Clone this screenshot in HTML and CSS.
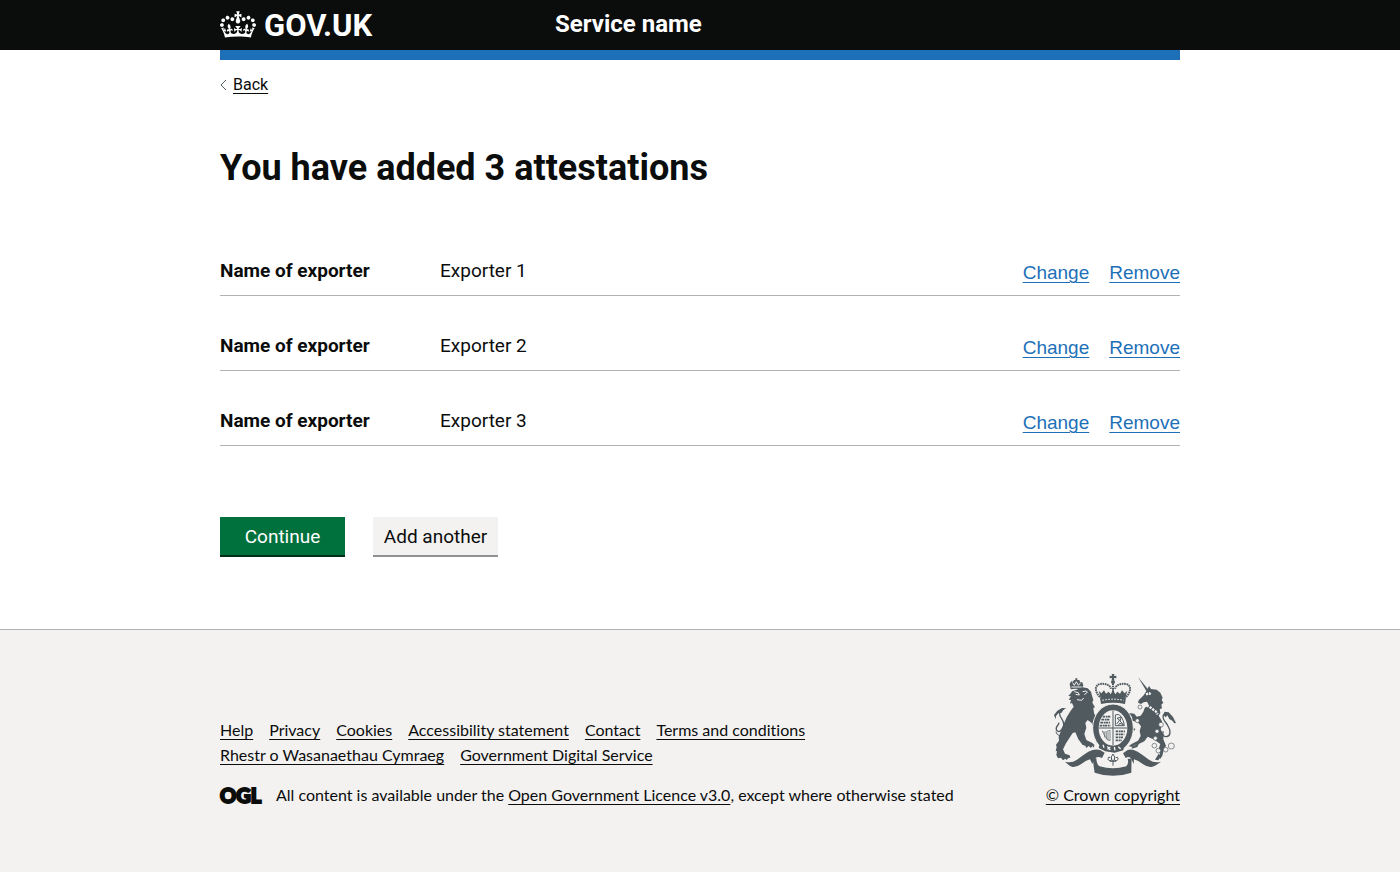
FILE: index.html
```
<!DOCTYPE html>
<html lang="en">
<head>
<meta charset="utf-8">
<meta name="viewport" content="width=device-width, initial-scale=1">
<title>You have added 3 attestations</title>
<link rel="stylesheet" href="styles.css">
</head>
<body>
<header class="header">
  <div class="container header-grid">
    <a class="logo" href="#">
      <svg class="crown" viewBox="0 0 132 97" aria-hidden="true"><path fill="currentColor" d="M25 30.2c3.5 1.5 7.7-.2 9.1-3.7 1.5-3.6-.2-7.8-3.9-9.2-3.6-1.4-7.6.3-9.1 3.9-1.4 3.5.3 7.5 3.9 9zM9 39.5c3.6 1.5 7.8-.2 9.2-3.7 1.5-3.6-.2-7.8-3.9-9.1-3.6-1.5-7.6.2-9.1 3.8-1.4 3.5.3 7.5 3.8 9zM4.4 57.2c3.5 1.5 7.7-.2 9.1-3.8 1.5-3.6-.2-7.7-3.9-9.1-3.5-1.5-7.6.3-9.1 3.8-1.4 3.5.3 7.6 3.9 9.1zm38.3-21.4c3.5 1.5 7.7-.2 9.1-3.8 1.5-3.6-.2-7.7-3.9-9.1-3.6-1.5-7.6.3-9.1 3.8-1.3 3.6.4 7.7 3.9 9.1zm64.4-5.6c-3.6 1.5-7.8-.2-9.1-3.7-1.5-3.6.2-7.8 3.8-9.2 3.6-1.4 7.7.3 9.2 3.9 1.3 3.5-.4 7.5-3.9 9zm15.9 9.3c-3.6 1.5-7.7-.2-9.1-3.7-1.5-3.6.2-7.8 3.7-9.1 3.6-1.5 7.7.2 9.2 3.8 1.5 3.5-.3 7.5-3.8 9zm4.7 17.7c-3.6 1.5-7.8-.2-9.2-3.8-1.5-3.6.2-7.7 3.9-9.1 3.6-1.5 7.7.3 9.2 3.8 1.3 3.5-.4 7.6-3.9 9.1zM89.3 35.8c-3.6 1.5-7.8-.2-9.2-3.8-1.4-3.6.2-7.7 3.9-9.1 3.6-1.5 7.7.3 9.2 3.8 1.4 3.6-.3 7.7-3.9 9.1zM69.7 17.7l8.9 4.7V9.3l-8.9 2.8c-.2-.3-.5-.6-.9-.9L72.4 0H59.6l3.5 11.2c-.3.3-.6.5-.9.9l-8.8-2.8v13.1l8.8-4.7c.3.3.6.7.9.9l-5 15.4v.1c-.2.8-.4 1.6-.4 2.4 0 4.1 3.1 7.5 7 8.1h.2c.3 0 .7.1 1 .1.4 0 .7 0 1-.1h.2c4-.6 7.1-4.1 7.1-8.1 0-.8-.1-1.7-.4-2.4V34l-5.1-15.4c.4-.2.7-.6 1-.9zM66 92.8c16.9 0 32.8 1.1 47.1 3.2 4-16.9 8.9-26.7 14-33.5l-9.6-3.4c1 4.9 1.1 7.2 0 10.2-1.5-1.4-3-4.3-4.2-8.7L108.6 76c2.8-2 5-3.2 7.5-3.3-4.4 9.4-10 11.9-13.6 11.2-4.3-.8-6.3-4.6-5.6-7.9 1-4.7 5.7-5.9 8-.5 4.3-8.7-3-11.4-7.6-8.8 7.1-7.2 7.9-13.5 2.1-21.1-8 6.1-8.1 12.3-4.5 20.8-4.7-5.4-12.1-2.5-9.5 6.2 3.4-5.2 7.9-2 7.2 3.1-.6 4.3-6.4 7.8-13.5 7.2-10.3-.9-10.9-8-11.2-13.8 2.5-.5 7.1 1.8 11 7.3L80.2 60c-4.1 4.4-8 5.3-12.3 5.4 1.4-4.4 8-11.6 8-11.6H55.5s6.4 7.2 7.9 11.6c-4.2-.1-8-1-12.3-5.4l1.4 16.4c3.9-5.5 8.5-7.7 10.9-7.3-.3 5.8-.9 12.8-11.1 13.8-7.2.6-12.9-2.9-13.5-7.2-.7-5 3.8-8.3 7.1-3.1 2.7-8.7-4.6-11.6-9.4-6.2 3.7-8.5 3.6-14.7-4.6-20.8-5.8 7.6-5 13.9 2.2 21.1-4.7-2.6-11.9.1-7.7 8.8 2.3-5.5 7.1-4.2 8.1.5.7 3.3-1.3 7.1-5.7 7.9-3.5.7-9-1.8-13.5-11.2 2.5.1 4.7 1.3 7.5 3.3l-4.7-15.4c-1.2 4.4-2.7 7.2-4.3 8.7-1.1-3-.9-5.3 0-10.2l-9.5 3.4c5 6.9 9.9 16.7 14 33.5 14.8-2.1 30.8-3.2 47.7-3.2z"/></svg>
      <span>GOV.UK</span>
    </a>
    <a class="service" href="#">Service name</a>
  </div>
</header>
<div class="container page">
  <div class="accent"></div>
  <a class="back" href="#"><svg class="chevron" viewBox="0 0 7 12" aria-hidden="true"><path d="M6 1 1 6l5 5" fill="none" stroke="#505a5f"/></svg><span>Back</span></a>
  <main>
    <h1>You have added 3 attestations</h1>
    <dl class="summary">
      <div class="row"><dt>Name of exporter</dt><dd>Exporter 1</dd><dd class="actions"><a href="#">Change</a><a href="#">Remove</a></dd></div>
      <div class="row"><dt>Name of exporter</dt><dd>Exporter 2</dd><dd class="actions"><a href="#">Change</a><a href="#">Remove</a></dd></div>
      <div class="row"><dt>Name of exporter</dt><dd>Exporter 3</dd><dd class="actions"><a href="#">Change</a><a href="#">Remove</a></dd></div>
    </dl>
    <div class="buttons">
      <button class="button" type="button">Continue</button>
      <button class="button secondary" type="button">Add another</button>
    </div>
  </main>
</div>
<footer class="footer">
  <div class="container footer-grid">
    <div class="meta">
      <ul class="links">
        <li><a href="#">Help</a></li>
        <li><a href="#">Privacy</a></li>
        <li><a href="#">Cookies</a></li>
        <li><a href="#">Accessibility statement</a></li>
        <li><a href="#">Contact</a></li>
        <li><a href="#">Terms and conditions</a></li>
        <li><a href="#">Rhestr o Wasanaethau Cymraeg</a></li>
        <li><a href="#">Government Digital Service</a></li>
      </ul>
      <div class="licence">
        <span class="ogl">OGL</span>
        <span>All content is available under the <a href="#">Open Government Licence v3.0</a>, except where otherwise stated</span>
      </div>
    </div>
    <a class="copyright" href="#">
      <svg class="crest" viewBox="36 27 375 306" aria-hidden="true">
        <!-- imperial crown -->
        <g fill="#505a5f">
          <path d="M215 27h8l-1 6 7-1v8l-7-1 1 7h-8l1-7-7 1v-8l7 1z"/>
          <circle cx="219" cy="51" r="6"/>
          <path d="M180 98q39-10 78 0l-3 19q-36-8-72 0z"/>
          <path d="m182 99-6-22 8 8 8-9 6 10 8-6 6 8 7-14 7 14 6-8 8 6 6-10 8 9 8-8-6 22z"/>
        </g>
        <path d="M180 96c-18-18-15-36 0-39 15-2 30 2 33 14M258 96c18-18 15-36 0-39-15-2-30 2-33 14" fill="none" stroke="#505a5f" stroke-width="6" stroke-dasharray="5 2"/>
        <path d="M219 55v31" stroke="#505a5f" stroke-width="6" stroke-dasharray="5 2"/>
        <path d="M187 106q32-7 64 0" fill="none" stroke="#f3f2f1" stroke-width="3" stroke-dasharray="5 4"/>
        <!-- lion -->
        <g fill="#505a5f">
          <path d="m96 79 12-4 20-8 15 3 10 10 3 12 4 12-3 9 8 14-5 2 2 15 7 16 15 4-8 5 8 8-9 3 4 9-8-1-2 8-8-9-6-13-12-9-7 9 3 14-6 19 6 18 18 9 6 5-1 9-5-5-4 6-7-6-7 6-3-7-8-2-13-17-9-21-8 2-20 31-9 18 6 13 14 5 2 7-6 1-5 6-4-4-7 5-6-8-9 2-5-10 2-12-4 1 3-13-2-7 9-12-1-12 8-20 8-20 8-18 11-18 10-14-5-11-6 2 3-11-7-1 7-10-8-1 8-9z"/>
          <path d="m92 73-3-17 5-7 5 1 3-5h4v-5h6v5h6l2 6 7 1 3 9-6 13q-15-5-32-1z"/>
          <path d="m42 150 10-13 14-8 13 1-9 4-5 9-10 2-7 8-1 10z"/>
        </g>
        <path d="m103 80 12 3 3 7-11-2m21-8 11-2 3 4-9 7m-22 15 14 2 6-7" fill="none" stroke="#f3f2f1" stroke-width="3"/>
        <path d="M94 66h31M98 53l5 8 6-11 6 11 7-8" fill="none" stroke="#f3f2f1" stroke-width="3"/>
        <path d="M72 132c-18 5-15 18-7 29 10 15 7 25-1 34-6 8-17 4-15-6 1-7 7-8 8-16" fill="none" stroke="#505a5f" stroke-width="4"/>
        <path d="M74 210c-10 5-24 2-26-10" fill="none" stroke="#505a5f" stroke-width="3"/>
        <!-- unicorn -->
        <g fill="#505a5f">
          <path d="m294 36 31 38-6 4z"/>
          <path d="m321 75 6-12 6 9 17 2 11 9 7 15-3 7 5 8-6 6 2 11-7 3 2 11-5 8 10 17-1 14-3 10 9 17-1 13 8 19-7 14-4 16-6 9-6-3 5-11-5-13 6-17-18-13-20-9-10 14-17 8-14 4-2 5-14-2 10-8 18-9 8-14-3-15 4-14-7-9-12-6-12-1 4 17 10 7-3 5-10-5-8-12-2-18 15-2-5-8-15-3-6-13 7-1 8 9 16 2 7 9 12-3 8-12 4-11 12-10-5-9-10 2-8 5-9-4 2-7 15-15z"/>
          <path d="m408 174-9-18-13-14-12-2-5 9 8 8 5-6 6 11 9 5 6 8z"/>
          <path d="m276 246 23-14-7 14-17 5zM345 284l11-18 7 7-8 13z"/>
        </g>
        <path d="M371 149c-8 14 7 21 13 34 9 15 8 31-5 32-10 1-13-9-9-16" fill="none" stroke="#505a5f" stroke-width="4"/>
        <path d="m310 119 18 6 20 15 5 8M318 88l10-3 4 3" fill="none" stroke="#f3f2f1" stroke-width="7" stroke-dasharray="7 3"/>
        <g fill="#f3f2f1" stroke="#505a5f" stroke-width="2">
          <circle cx="300" cy="126" r="6"/><circle cx="292" cy="167" r="6"/>
          <circle cx="363" cy="179" r="7"/><circle cx="351" cy="199" r="6"/><circle cx="346" cy="220" r="6"/>
          <circle cx="343" cy="242" r="7"/><circle cx="355" cy="257" r="7"/><circle cx="377" cy="254" r="7"/><circle cx="394" cy="243" r="9"/>
        </g>
        <!-- garter and shield -->
        <ellipse cx="219" cy="189" rx="61" ry="72" fill="#505a5f" stroke="#f3f2f1" stroke-width="3"/>
        <ellipse cx="219" cy="189" rx="43" ry="53" fill="#f3f2f1"/>
        <g fill="none" stroke="#505a5f">
          <path d="M219 137v104M177 189h84" stroke-width="3"/>
          <path d="M188 155h23m-27 9h26m-29 9h30m-32 9h32" stroke-width="5" stroke-dasharray="8 2 4 1"/>
          <path d="M227 199h28m-28 9h26m-26 9h23m-23 9h18" stroke-width="5" stroke-dasharray="7 2 5 1"/>
          <path d="M226 150c13-7 24 9 27 32h-27zM230 177l9-12-8-5 13-4-4 12 10 11-11-4-5 8" stroke-width="3"/>
          <path d="M187 198c6 8 14 0 23-2v31c-8-1-16-13-23-29zM194 203v14m5-15v21m5-23v26" stroke-width="2"/>
        </g>
        <path d="m180 234 20 9 25 3 28-7-3 17-26 7-28-4-20-10z" fill="#505a5f"/>
        <path d="m189 239 3 9m10-4 9 11m0-9-9 7m21-7 2 10m10-11 7 7" stroke="#f3f2f1" stroke-width="4" fill="none"/>
        <!-- scroll -->
        <g fill="#505a5f">
          <path d="M75 290q20 5 36-6 18-14 34-24 18-9 35-5l14 8-8 16q-16-7-22 3l-7 15-7-14q-13 3-26 14-14 10-26 9-9-2-23-16z"/>
          <path d="M363 290q-20 5-36-6-18-14-34-24-18-9-30-5l-14 10 8 14q11-7 17 3l7 15 1-14q13 3 26 14 14 10 26 9 11-2 29-16z"/>
          <path d="M159 280h10q0 18 10 24 40 12 80 0 8-8 4-23h12q-1 21-1 42-55 19-110 0-4-20-5-43z"/>
        </g>
        <!-- fleuron -->
        <g fill="none" stroke="#505a5f" stroke-width="3">
          <path d="M219 267q-8 8-4 19h8q4-11-4-19zM214 286q-9 4-10-5 0-7 7-3M224 286q9 4 10-5 0-7-7-3M210 289h18M219 289v13"/>
        </g>
      </svg>
      <span>© Crown copyright</span>
    </a>
  </div>
</footer>
</body>
</html>
```
FILE: styles.css
```
* { box-sizing: border-box; }
body {
  margin: 0;
  min-height: 100vh;
  display: flex;
  flex-direction: column;
  color: #0b0c0c;
  background: #fff;
  font: 16px/20px Roboto, "Liberation Sans", sans-serif;
}
a { color: inherit; text-decoration-thickness: 1px; text-underline-offset: 3px; }
.container { width: calc(100% - 60px); max-width: 960px; margin: 0 auto; }

.header { background: #0b0c0c; color: #fff; }
.header a { text-decoration: none; font-weight: 700; }
.header-grid { display: grid; grid-template-columns: 335px 1fr; height: 50px; align-items: center; }
.logo { display: flex; align-items: center; gap: 8px; font-size: 31px; line-height: 30px; padding-top: 2px; }
.crown { width: 36px; height: 27px; margin-bottom: 4px; }
.service { font-size: 24px; line-height: 28px; padding-bottom: 2px; }

.accent { height: 10px; background: #1d70b8; }
.back { display: inline-flex; align-items: center; gap: 6px; margin-top: 15px; text-decoration: none; }
.back span { text-decoration: underline; text-decoration-thickness: 1px; text-underline-offset: 3px; }
.chevron { width: 7px; height: 12px; }
h1 { margin: 52px 0 49px; font-size: 36px; line-height: 40px; font-weight: 700; }

.summary { margin: 0; font-size: 19px; line-height: 25px; }
.row { display: grid; grid-template-columns: 220px 1fr auto; min-height: 75px; padding-top: 37px; border-bottom: 1px solid #b1b4b6; }
.row:first-child { min-height: 59px; padding-top: 21px; }
dt { font-weight: 700; }
dd { margin: 0; }
.actions { display: flex; gap: 20px; padding-top: 2px; color: #1d70b8; font-family: "Liberation Sans", Arial, sans-serif; }

.buttons { display: flex; flex-wrap: wrap; gap: 28px; margin: 71px 0 74px; }
.button {
  width: 125px;
  height: 38px;
  padding: 2px 0 0;
  border: 0;
  background: #00703c;
  color: #fff;
  box-shadow: 0 2px 0 #002d18;
  font: inherit;
  font-size: 19px;
  cursor: pointer;
}
.secondary { background: #f3f2f1; color: #0b0c0c; box-shadow: 0 2px 0 #929191; }

.footer { flex: 1; border-top: 1px solid #b1b4b6; background: #f3f2f1; padding: 44px 0 64px; font-family: Lato, Roboto, sans-serif; font-variant-ligatures: none; }
.footer-grid { display: flex; justify-content: space-between; align-items: flex-end; gap: 30px; }
.links { display: flex; flex-wrap: wrap; gap: 5px 16px; max-width: 640px; margin: 0 0 20px; padding: 0; list-style: none; }
.licence { display: flex; align-items: center; gap: 15px; }
.ogl { width: 41px; font: 900 20px/20px Lato, sans-serif; -webkit-text-stroke: 2px #0b0c0c; }
.copyright { display: flex; flex-direction: column; align-items: flex-end; gap: 9px; white-space: nowrap; }
.crest { width: 125px; height: 102px; margin-right: 3px; }
```
